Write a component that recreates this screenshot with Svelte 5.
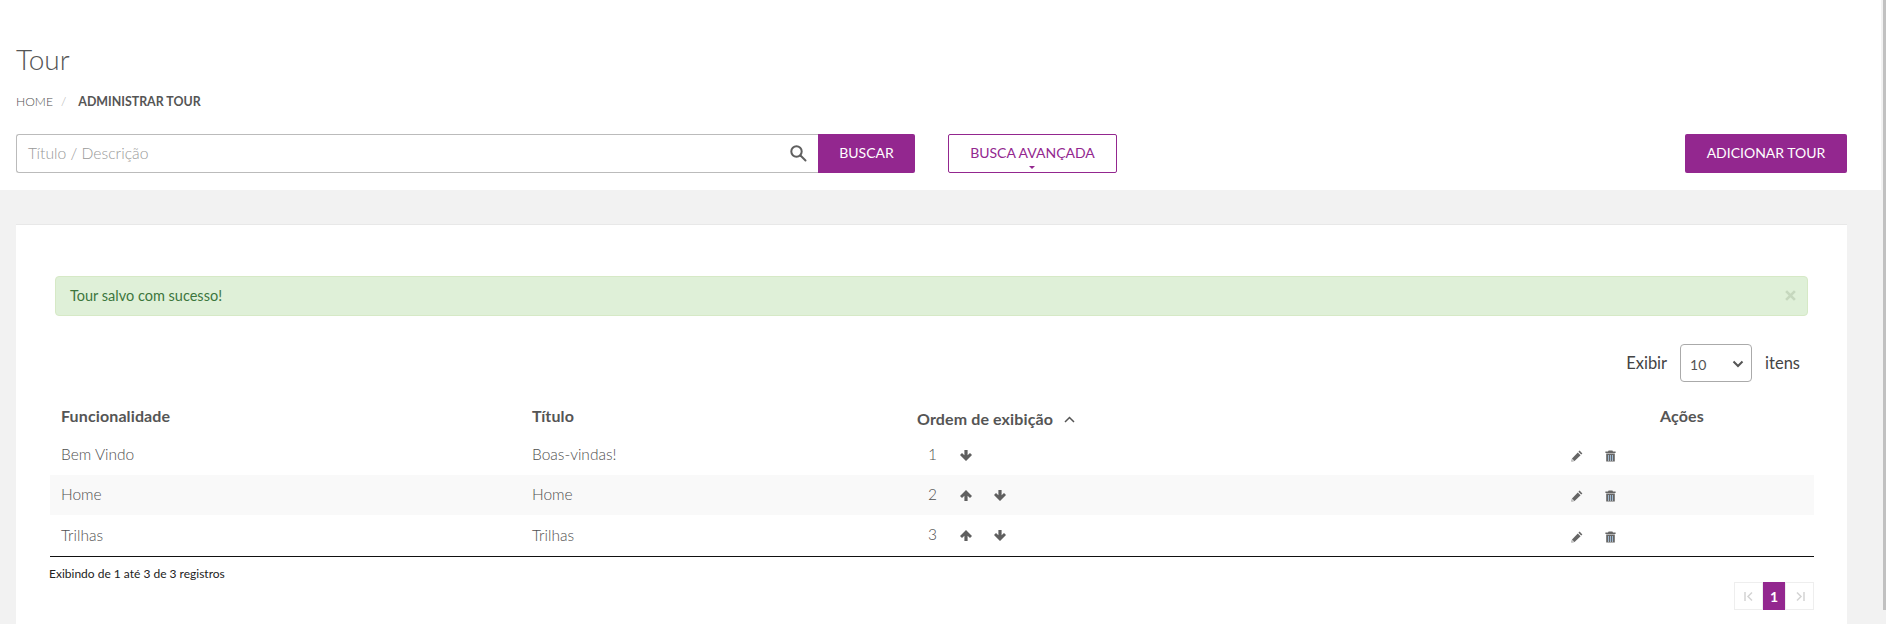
<script>
    const rows = [
        { name: "Bem Vindo", title: "Boas-vindas!", order: 1, up: false, down: true },
        { name: "Home", title: "Home", order: 2, up: true, down: true },
        { name: "Trilhas", title: "Trilhas", order: 3, up: true, down: true },
    ];
</script>

<div class="shell">
    <div class="main">
        <header class="top">
            <h1>Tour</h1>
            <nav class="crumbs">
                <span>HOME</span>
                <span class="sep">/</span>
                <strong>ADMINISTRAR TOUR</strong>
            </nav>
            <div class="tools">
                <div class="search">
                    <span class="placeholder">Título / Descrição</span>
                    <svg class="lupa" width="18" height="18" viewBox="0 0 18 18" fill="none" stroke="#5f5f5f" stroke-width="2">
                        <circle cx="7.5" cy="7.5" r="5.2" />
                        <path d="M11.5 11.5 L16.5 16.5" stroke-linecap="round" />
                    </svg>
                </div>
                <button class="btn buscar">BUSCAR</button>
                <button class="advanced">
                    BUSCA AVANÇADA
                    <span class="caret"></span>
                </button>
                <button class="btn add">ADICIONAR TOUR</button>
            </div>
        </header>

        <section class="content">
            <div class="card">
                <div class="alert">
                    <span>Tour salvo com sucesso!</span>
                    <svg class="close" width="11" height="11" viewBox="0 0 10 10" stroke="#c6d8be" stroke-width="2.4">
                        <path d="M1 1 L9 9 M9 1 L1 9" />
                    </svg>
                </div>

                <div class="show">
                    <span>Exibir</span>
                    <div class="select">
                        <span>10</span>
                        <svg width="12" height="8" viewBox="0 0 12 8" fill="none" stroke="#555" stroke-width="2">
                            <path d="M1.5 1.5 L6 6 L10.5 1.5" />
                        </svg>
                    </div>
                    <span>itens</span>
                </div>

                <table>
                    <colgroup>
                        <col class="c1" />
                        <col class="c2" />
                        <col class="c3" />
                        <col class="c4" />
                    </colgroup>
                    <thead>
                        <tr>
                            <th>Funcionalidade</th>
                            <th>Título</th>
                            <th class="order-head">
                                Ordem de exibição
                                <svg width="11" height="7" viewBox="0 0 11 7" fill="none" stroke="#555" stroke-width="1.5">
                                    <path d="M1 6 L5.5 1.5 L10 6" />
                                </svg>
                            </th>
                            <th class="actions-head">Ações</th>
                        </tr>
                    </thead>
                    <tbody>
                        {#each rows as row}
                            <tr>
                                <td class="txt">{row.name}</td>
                                <td class="txt">{row.title}</td>
                                <td>
                                    <div class="order">
                                        <span class="num">{row.order}</span>
                                        {#if row.up}
                                            <span class="arrow">
                                                <svg width="12" height="11" viewBox="0 0 12 11" fill="#5f5f5f">
                                                    <path d="M6 0 L12 6 L10 8 L7.6 5.8 V11 H4.4 V5.8 L2 8 L0 6 Z" />
                                                </svg>
                                            </span>
                                        {/if}
                                        {#if row.down}
                                            <span class="arrow">
                                                <svg width="12" height="11" viewBox="0 0 12 11" fill="#5f5f5f">
                                                    <path d="M6 11 L0 5 L2 3 L4.4 5.2 V0 H7.6 V5.2 L10 3 L12 5 Z" />
                                                </svg>
                                            </span>
                                        {/if}
                                    </div>
                                </td>
                                <td>
                                    <div class="actions">
                                        <svg width="12" height="12" viewBox="0 0 12 12" fill="#666">
                                            <path d="M8.6 0.6 L11.4 3.4 L10.2 4.6 L7.4 1.8 Z M6.8 2.4 L9.6 5.2 L3.6 11 L0.4 11.6 L1 8.4 Z" />
                                            <path d="M1 8.4 L3.6 11 L0.4 11.6 Z" fill="#c9c9c9" />
                                        </svg>
                                        <svg width="11" height="12" viewBox="0 0 11 12" fill="#666">
                                            <path d="M3.6 0.4 H7.4 L8 1.6 H10.6 V3 H0.4 V1.6 H3 Z" />
                                            <path fill-rule="evenodd" d="M1.2 3.6 H9.8 V11.6 H1.2 Z M3 5 V10.4 H4 V5 Z M5 5 V10.4 H6 V5 Z M7 5 V10.4 H8 V5 Z" />
                                            <path d="M3 5 H4 V10.4 H3 Z M5 5 H6 V10.4 H5 Z M7 5 H8 V10.4 H7 Z" fill="#9db8d2" />
                                        </svg>
                                    </div>
                                </td>
                            </tr>
                        {/each}
                    </tbody>
                </table>

                <div class="info">Exibindo de 1 até 3 de 3 registros</div>

                <div class="pager">
                    <span class="page-btn first">
                        <svg width="10" height="9" viewBox="0 0 10 9" fill="none" stroke="#d4d4d4" stroke-width="1.5">
                            <path d="M1 0 V9 M8 0.5 L4 4.5 L8 8.5" />
                        </svg>
                    </span>
                    <span class="page-btn current">1</span>
                    <span class="page-btn last">
                        <svg width="10" height="9" viewBox="0 0 10 9" fill="none" stroke="#d4d4d4" stroke-width="1.5">
                            <path d="M9 0 V9 M2 0.5 L6 4.5 L2 8.5" />
                        </svg>
                    </span>
                </div>
            </div>
        </section>
    </div>
    <div class="scrollbar"><div class="thumb"></div></div>
</div>

<style>
    :global(body) {
        margin: 0;
        background: #f2f2f2;
    }

    .shell {
        display: flex;
        height: 624px;
        overflow: hidden;
        font-family: Lato, "Open Sans", sans-serif;
        font-weight: 300;
        color: #4f4f4f;
    }

    .main {
        flex: 1;
        min-width: 0;
    }

    .scrollbar {
        width: 3px;
        margin-left: 2px;
    }

    .thumb {
        height: 610px;
        background: #c1c1c1;
    }

    .top {
        height: 190px;
        box-sizing: border-box;
        padding: 41px 34px 0 16px;
        background: #fff;
    }

    h1 {
        margin: 0;
        font-size: 28px;
        font-weight: 300;
        line-height: 36px;
        color: #555;
    }

    .crumbs {
        display: flex;
        margin-top: 16px;
        font-size: 12.2px;
        line-height: 18px;
    }

    .crumbs strong {
        font-weight: 700;
        font-size: 12.4px;
        color: #555;
    }

    .sep {
        margin: 0 12px 0 8px;
        color: #aaa;
    }

    .tools {
        display: flex;
        margin-top: 23px;
        height: 39px;
    }

    .search {
        display: flex;
        align-items: center;
        justify-content: space-between;
        width: 802px;
        box-sizing: border-box;
        padding: 0 11px 1px 11px;
        border: 1px solid #bbb;
        border-right: 0;
        border-radius: 3px 0 0 3px;
        font-size: 15.7px;
    }

    .placeholder {
        color: #999;
    }

    .btn {
        padding: 0 0 2px;
        border: 0;
        border-radius: 2px;
        background: #93278f;
        color: #fff;
        font: inherit;
        font-size: 14px;
        font-weight: 400;
    }

    .buscar {
        width: 97px;
        border-radius: 0 2px 2px 0;
    }

    .advanced {
        position: relative;
        width: 169px;
        margin-left: 33px;
        padding: 0 0 2px;
        border: 1px solid #93278f;
        border-radius: 2px;
        background: #fff;
        color: #93278f;
        font: inherit;
        font-size: 14px;
        font-weight: 400;
    }

    .caret {
        position: absolute;
        left: 80px;
        bottom: 3px;
        border-top: 3px solid #93278f;
        border-left: 3px solid transparent;
        border-right: 3px solid transparent;
    }

    .add {
        width: 162px;
        margin-left: auto;
    }

    .content {
        padding: 34px 34px 0 16px;
    }

    .card {
        height: 420px;
        box-sizing: border-box;
        padding: 52px 33px 0 34px;
        border-top: 1px solid #e8e8e8;
        background: #fff;
    }

    .alert {
        display: flex;
        align-items: center;
        justify-content: space-between;
        height: 40px;
        box-sizing: border-box;
        margin: -1px 6px 0 5px;
        padding: 0 11px 2px 14px;
        border: 1px solid #d6e9c6;
        border-radius: 4px;
        background: #dff0d8;
        color: #3c763d;
        font-size: 14.5px;
        font-weight: 400;
    }

    .show {
        display: flex;
        align-items: center;
        justify-content: flex-end;
        gap: 13px;
        margin: 28px 14px 0 0;
        height: 38px;
        font-size: 16.5px;
        font-weight: 400;
        color: #444;
    }

    .select {
        display: flex;
        align-items: center;
        justify-content: space-between;
        width: 72px;
        height: 38px;
        box-sizing: border-box;
        padding: 2px 7px 0 9px;
        border: 1px solid #aaa;
        border-radius: 4px;
        color: #555;
        font-size: 14px;
    }

    table {
        width: 100%;
        margin-top: 13px;
        border-collapse: separate;
        border-spacing: 0;
        table-layout: fixed;
        border-bottom: 1px solid #111;
    }

    .c1 {
        width: 471px;
    }

    .c2 {
        width: 385px;
    }

    .c3 {
        width: 654px;
    }

    th,
    td {
        height: 40px;
        box-sizing: border-box;
        padding: 0 11px;
        text-align: left;
        font-size: 15.5px;
    }

    tbody tr:last-child td {
        height: 41px;
    }

    th {
        color: #555;
        font-size: 16px;
        font-weight: 700;
        letter-spacing: 0.12px;
    }

    .txt {
        padding-bottom: 2px;
    }

    .order-head {
        padding-top: 6px;
    }

    .order-head svg {
        margin-left: 7px;
        vertical-align: 2px;
    }

    .actions-head {
        padding-left: 100px;
    }

    tbody tr:nth-child(2) {
        background: #f9f9f9;
    }

    .order {
        display: flex;
        align-items: center;
        padding-left: 11px;
    }

    .num {
        width: 32px;
        margin-bottom: 3px;
    }

    .arrow {
        display: flex;
        width: 34px;
    }

    .actions {
        display: flex;
        align-items: center;
        gap: 22px;
        padding-top: 2px;
    }

    .info {
        margin: 10px 0 0 -1px;
        font-size: 12px;
        font-weight: 400;
        line-height: 14px;
        color: #222;
    }

    .pager {
        display: flex;
        justify-content: flex-end;
        margin-top: 1px;
    }

    .page-btn {
        display: flex;
        align-items: center;
        justify-content: center;
        height: 28px;
        box-sizing: border-box;
    }

    .first,
    .last {
        width: 29px;
        border: 1px solid #eee;
    }

    .current {
        width: 22px;
        background: #93278f;
        color: #fff;
        font-size: 14px;
        font-weight: 700;
    }
</style>
